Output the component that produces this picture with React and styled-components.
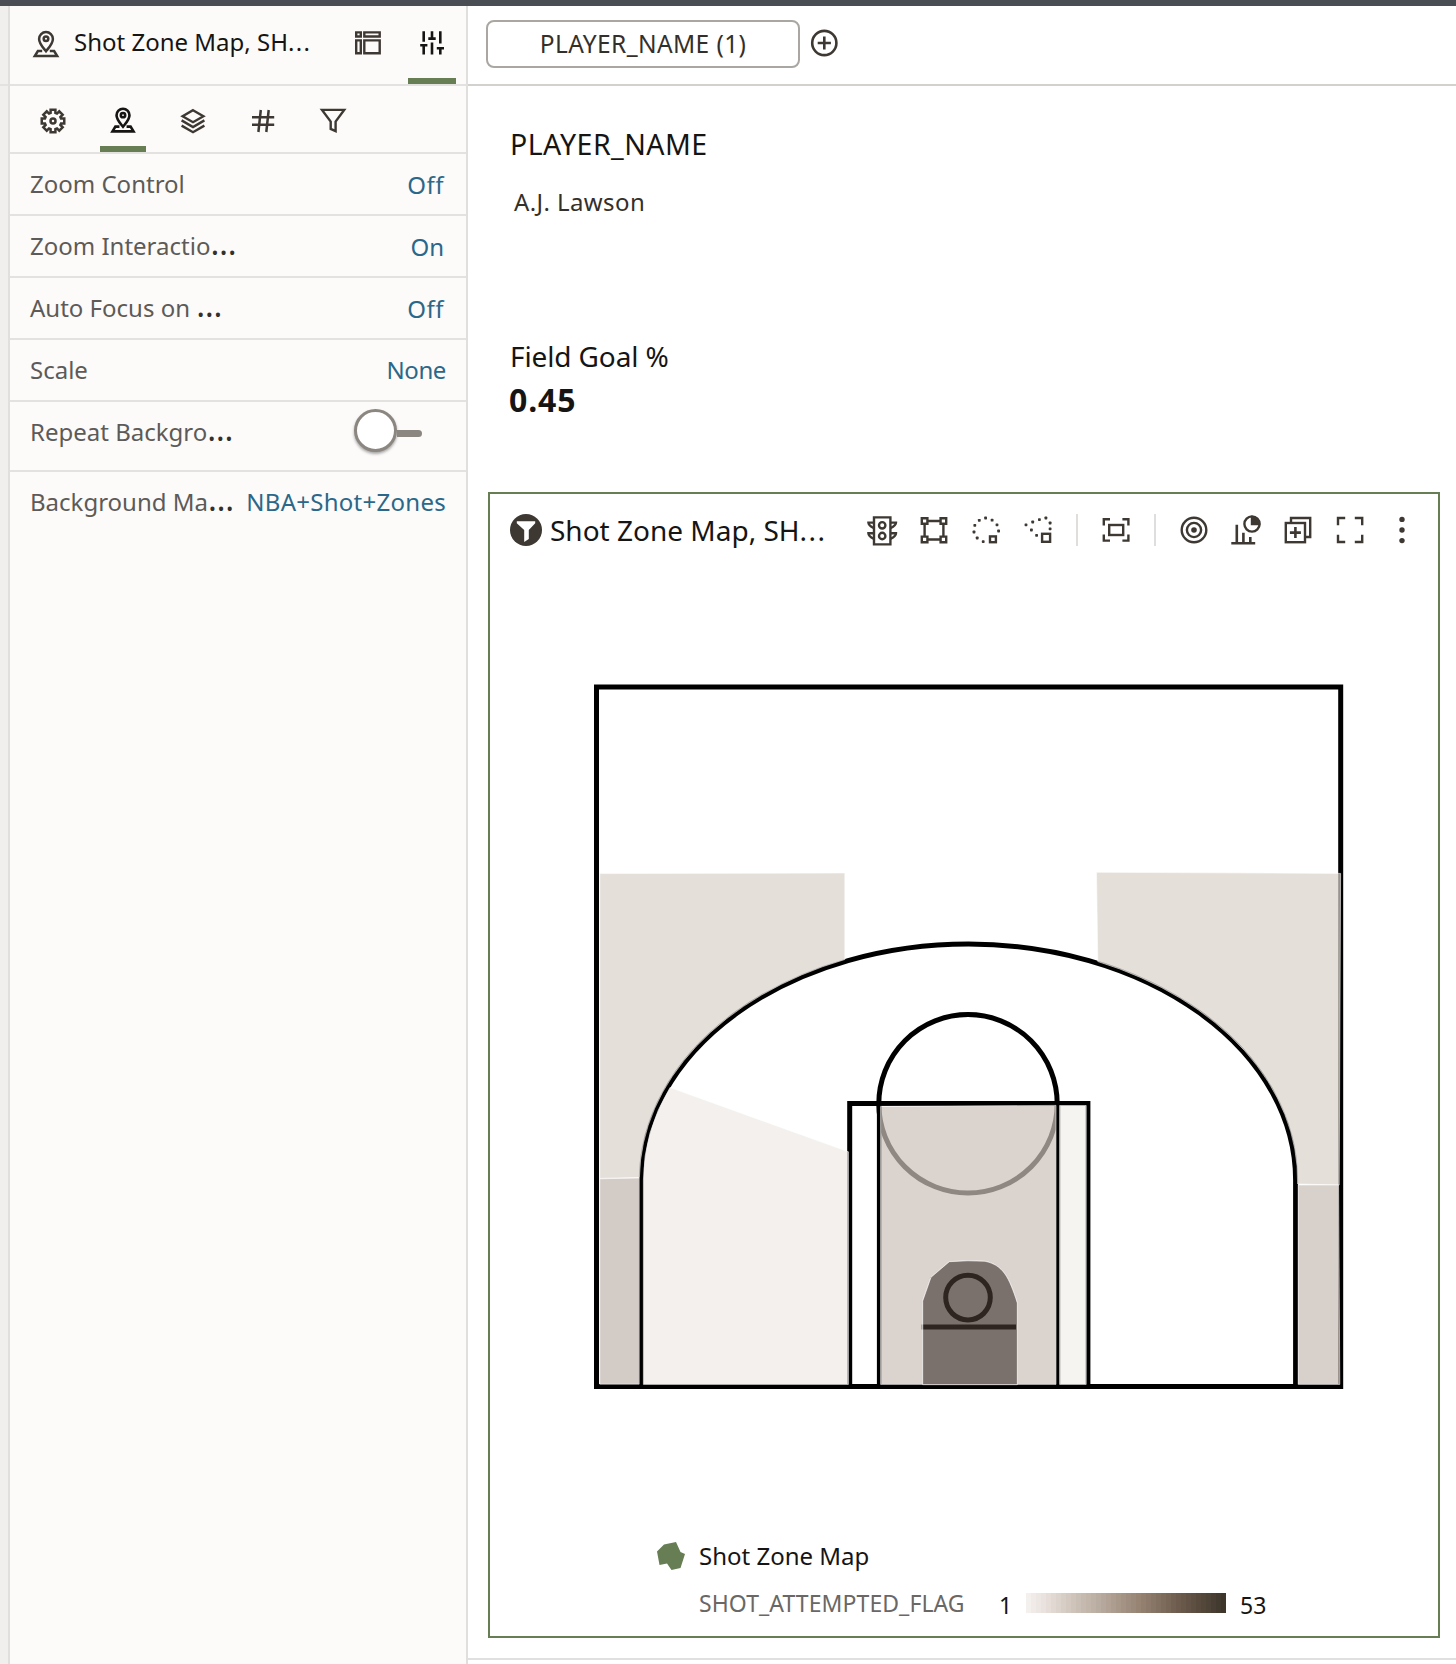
import React from "react";
import styled, { createGlobalStyle } from "styled-components";

const ink = "#161513";
const icon = "#3d3832";
const green = "#677d54";
const link = "#2b6788";
const line = "#e3e2e0";

const GlobalStyle = createGlobalStyle`
  * { box-sizing: border-box; }
  body {
    margin: 0;
    background: #fff;
    color: ${ink};
    font-family: "Noto Sans", "Open Sans", sans-serif;
    -webkit-font-smoothing: antialiased;
  }
`;

const Page = styled.div`
  display: flex;
  flex-direction: column;
  width: 1456px;
  height: 1664px;
  overflow: hidden;
`;
const TopBar = styled.div`
  height: 6px;
  flex: none;
  background: #4b4d55;
`;
const Body = styled.div`
  display: flex;
  flex: 1;
  min-height: 0;
`;
const Rail = styled.div`
  width: 10px;
  flex: none;
  background: #f0efed;
  border-right: 2px solid #e0dfdd;
`;
const RailHead = styled.div`
  height: 80px;
  border-bottom: 2px solid ${line};
`;
const Panel = styled.aside`
  width: 458px;
  flex: none;
  background: #fcfbfa;
  border-right: 2px solid #e0dfdd;
`;
const PanelHead = styled.header`
  display: flex;
  height: 80px;
  padding: 0 10px 0 20px;
  border-bottom: 2px solid ${line};
`;
const HeadIcon = styled.div`
  padding-top: 22px;
  width: 44px;
  flex: none;
`;
const Title = styled.div`
  flex: 1;
  height: 72px;
  line-height: 72px;
  font-size: 24px;
  white-space: nowrap;
`;
const TitleDots = styled.span`
  letter-spacing: 1.4px;
`;
const HeadTab = styled.div`
  display: flex;
  flex-direction: column;
  align-items: center;
  justify-content: space-between;
  width: 48px;
  margin-left: ${(p) => (p.$active ? 17 : 15)}px;
  padding-top: 21px;
  border-bottom: ${(p) => (p.$active ? `6px solid ${green}` : "0")};
  flex: none;
`;
const SubTabs = styled.nav`
  display: flex;
  gap: 24px;
  height: 68px;
  padding-left: 20px;
  border-bottom: 2px solid ${line};
`;
const SubTab = styled.div`
  display: flex;
  justify-content: center;
  width: 46px;
  padding-top: 19px;
  border-bottom: ${(p) => (p.$active ? `6px solid ${green}` : "0")};
`;
const Row = styled.div`
  display: flex;
  justify-content: space-between;
  height: ${(p) => (p.$tall ? 70 : 62)}px;
  padding: 0 ${(p) => p.$right || 20}px 0 20px;
  border-bottom: ${(p) => (p.$last ? "0" : `2px solid ${line}`)};
  line-height: 60px;
  font-size: 24px;
  white-space: nowrap;
`;
const Label = styled.span`
  height: 60px;
  color: #5d5a57;
`;
const Dots = styled.span`
  color: #33302c;
  font-size: 33px;
  line-height: 0;
`;
const Value = styled.span`
  color: ${link};
  line-height: ${(p) => (p.$raised ? 60 : 62)}px;
  letter-spacing: ${(p) => p.$track || 0}px;
`;
const Toggle = styled.div`
  display: flex;
  align-items: center;
  height: 43px;
  margin-top: 7px;
`;
const Thumb = styled.div`
  width: 43px;
  height: 43px;
  border: 3px solid #8b8680;
  border-radius: 50%;
  background: #fff;
  box-shadow: 0 2px 3px rgba(0, 0, 0, 0.35);
`;
const Track = styled.div`
  width: 25px;
  height: 7px;
  margin-top: 5px;
  border-radius: 0 4px 4px 0;
  background: #8b8680;
`;

const Main = styled.main`
  display: flex;
  flex-direction: column;
  flex: 1;
`;
const FilterBar = styled.div`
  display: flex;
  height: 80px;
  padding: 14px 0 0 18px;
  border-bottom: 2px solid #d3d1ce;
  flex: none;
`;
const Pill = styled.div`
  width: 314px;
  height: 48px;
  border: 2px solid #aaa6a1;
  border-radius: 8px;
  text-align: center;
  font-size: 24.5px;
  line-height: 43px;
  letter-spacing: 0.4px;
  color: #33302c;
`;
const AddButton = styled.div`
  padding: 7px 0 0 8px;
`;
const Canvas = styled.div`
  display: flex;
  flex-direction: column;
  height: 1574px;
  padding: 0 16px 20px 20px;
  border-bottom: 2px solid #e0e0e0;
`;
const Heading = styled.div`
  height: 40px;
  padding-left: 22px;
  margin-top: ${(p) => p.$top}px;
  font-size: ${(p) => p.$size || 28}px;
  line-height: 40px;
  letter-spacing: ${(p) => p.$track || 0}px;
`;
const PlayerValue = styled.div`
  height: 36px;
  margin-top: 19px;
  padding-left: 26px;
  font-size: 24px;
  line-height: 38px;
  letter-spacing: 0.4px;
  color: #33302c;
`;
const Metric = styled.div`
  height: 44px;
  padding-left: 21px;
  font-size: 32px;
  font-weight: 700;
  line-height: 47px;
  letter-spacing: 0.9px;
`;
const Card = styled.section`
  display: flex;
  flex-direction: column;
  height: 1146px;
  margin-top: auto;
  flex: none;
  border: 2px solid ${green};
`;
const CardBar = styled.div`
  display: flex;
  height: 76px;
  padding: 0 20px;
`;
const FilterBadge = styled.div`
  padding-top: 20px;
  width: 40px;
  flex: none;
`;
const CardTitle = styled.div`
  flex: 1;
  font-size: 28px;
  line-height: 72px;
  white-space: nowrap;
`;
const Tools = styled.div`
  display: flex;
  align-items: flex-start;
  gap: 20px;
  padding-top: 20px;
`;
const Divider = styled.div`
  width: 2px;
  height: 32px;
  margin: 0 2px;
  background: #dfdedd;
`;
const Court = styled.svg`
  display: block;
  flex: none;
`;
const Legend = styled.div`
  display: grid;
  grid-template-columns: 42px auto;
  padding: 31px 0 0 167px;
`;
const LegendTitle = styled.div`
  height: 47px;
  font-size: 24px;
  line-height: 46px;
`;
const LegendMark = styled.div`
  padding-top: 9px;
`;
const Scale = styled.div`
  display: flex;
  grid-column: 2;
  height: 46px;
  line-height: 46px;
`;
const Measure = styled.div`
  width: 300px;
  font-size: 23px;
  letter-spacing: 0.08px;
  color: #6a6764;
`;
const Bound = styled.div`
  width: ${(p) => p.$w}px;
  padding-top: 2px;
  font-size: 23px;
`;
const Ramp = styled.div`
  display: flex;
  width: 200px;
  height: 20px;
  margin: 13px 14px 0 0;
`;
const RampCell = styled.div`
  flex: 1;
`;
const Glyph = styled.svg`
  display: block;
  flex: none;
`;

const Svg = ({ size = 32, color = icon, children }) => (
  <Glyph width={size} height={size} viewBox="0 0 32 32" fill="none" stroke={color} strokeWidth="2.4">
    {children}
  </Glyph>
);

const PinIcon = ({ size, color = icon, weight = 2.5 }) => (
  <Svg size={size} color={color}>
    <g strokeWidth={weight}>
      <path d="M16 23.2C13 19.4 9.1 15.6 9.1 10.9a6.9 6.9 0 0 1 13.8 0C22.9 15.6 19 19.4 16 23.2z" />
      <circle cx="16" cy="10.8" r="2.3" />
      <path d="M12.2 23H7.9L4.8 28.1H27.2L24.1 23H19.8" />
    </g>
  </Svg>
);
const LayoutIcon = () => (
  <Svg>
    <path d="M5.2 5.4h4.6v4.1H5.2zM13.3 5.4h15.4v4.1H13.3zM5.2 13.4h4.6v12.8H5.2zM13.3 13.4h15.4v12.8H13.3z" />
  </Svg>
);
const SlidersIcon = () => (
  <Svg color={ink}>
    <g strokeWidth="2.6">
      <path d="M7.7 4.3V14.7M4.2 18.3h7.2M7.7 18.3V27.6M16 4.3V11.5M12.3 11.6h7.4M16 15.6V27.6M24.3 4.3V16.4M20.8 21.2h7.2M24.3 21.2V27.6" />
    </g>
  </Svg>
);

function gearPath() {
  const pts = [];
  for (let i = 0; i < 8; i++) {
    const base = (i * Math.PI) / 4 - Math.PI / 2;
    [[-0.29, 8.4], [-0.21, 11.5], [0.21, 11.5], [0.29, 8.4]].forEach(([a, r]) => {
      pts.push(`${(16 + r * Math.cos(base + a)).toFixed(2)} ${(16 + r * Math.sin(base + a)).toFixed(2)}`);
    });
  }
  return `M${pts.join("L")}Z`;
}
const GearIcon = () => (
  <Svg>
    <path d={gearPath()} strokeWidth="2.5" />
    <circle cx="16" cy="16" r="2.5" strokeWidth="2.5" />
  </Svg>
);
const LayersIcon = () => (
  <Svg>
    <path d="M16 5.2L26.4 11.2L16 17.2L5.6 11.2Z" />
    <path d="M4.6 15.4L16 22L27.4 15.4M4.6 20.6L16 27.2L27.4 20.6" />
  </Svg>
);
const HashIcon = () => (
  <Svg>
    <path d="M5 12.3H27.2M5 19.8H27.2M13.8 5L11.4 27M21.7 5L19.3 27" strokeWidth="2.5" />
  </Svg>
);
const FunnelIcon = () => (
  <Svg>
    <path d="M5 4.9H27.2L18.6 16.6V26.2L13.7 23.9V16.6Z" />
  </Svg>
);
const PlusCircleIcon = () => (
  <Svg>
    <circle cx="16.3" cy="16" r="12.1" strokeWidth="2.6" />
    <path d="M16.3 9.4V22.6M9.7 16H22.9" strokeWidth="2.6" />
  </Svg>
);
const FilterBadgeIcon = () => (
  <Svg>
    <circle cx="16" cy="16" r="16" fill={icon} stroke="none" />
    <path d="M6.8 7.2H25.2V9.2L18.8 16V25L14.2 28V16L6.8 9.2Z" fill="#fff" stroke="none" />
  </Svg>
);
const TrafficIcon = () => (
  <Svg>
    <path d="M8 3.4H24.4V30.4H8Z" />
    <circle cx="16.2" cy="11.3" r="3.2" />
    <circle cx="16.2" cy="22" r="3.2" />
    <path d="M8 8.6H2.4C2.4 11 4.5 12.6 8 14.2M8 19.3H2.4C2.4 21.7 4.5 23.3 8 24.9M24.4 8.6H30C30 11 27.9 12.6 24.4 14.2M24.4 19.3H30C30 21.7 27.9 23.3 24.4 24.9" />
  </Svg>
);
const RectSelectIcon = () => (
  <Svg>
    <path d="M3.8 4.2h5.6v5.6H3.8zM22.6 4.2h5.6v5.6H22.6zM3.8 22.6h5.6v5.6H3.8zM22.6 22.6h5.6v5.6H22.6zM9.3 7H22.7M9.3 25.5H22.7M6.6 9.8V22.7M25.4 9.8V22.7" />
  </Svg>
);
const dotSquares = (pts) =>
  pts.map(([x, y]) => <rect key={`${x}-${y}`} x={x - 1.4} y={y - 1.4} width="2.8" height="2.8" rx="0.7" fill={icon} stroke="none" />);
const CircleSelectIcon = () => (
  <Svg>
    {dotSquares([[15.6, 4], [22.1, 6.2], [27, 10.8], [28.6, 17], [9.3, 6.3], [4.8, 11.4], [4, 18], [7.2, 24], [13.2, 27.6]])}
    <rect x="20" y="22.4" width="5.9" height="5.8" />
  </Svg>
);
const LassoIcon = () => (
  <Svg>
    {dotSquares([[23.9, 4], [17.4, 5.6], [10.7, 8], [4, 10.8], [9.4, 16], [14.6, 21.4], [28.1, 9], [28.1, 14.8]])}
    <rect x="20.1" y="19.8" width="8" height="8" />
  </Svg>
);
const FitIcon = () => (
  <Svg>
    <path d="M3.8 11.4V5.2H10M22.4 5.2H28.4V11.4M28.4 20.6V26.6H22.4M10 26.6H3.8V20.6" />
    <rect x="9.2" y="11" width="14" height="10" />
  </Svg>
);
const TargetIcon = () => (
  <Svg>
    <circle cx="16" cy="16" r="12.3" />
    <circle cx="16" cy="16" r="7.1" />
    <circle cx="16" cy="16" r="2.8" fill={icon} stroke="none" />
  </Svg>
);
const ChartIcon = () => (
  <Svg>
    <path d="M1.3 29.3H25.2M6.8 29V10.7M13.4 29V18.7M20.3 29V23" strokeWidth="2.6" />
    <circle cx="22" cy="10" r="7.6" />
    <path d="M22 10V3A7 7 0 0 1 29 10Z" fill={icon} />
  </Svg>
);
const CopyPlusIcon = () => (
  <Svg>
    <path d="M9 8V4H28.2V23H23" />
    <rect x="3.8" y="9" width="19.2" height="19.2" />
    <path d="M13.4 13V24M7.9 18.6H18.9" strokeWidth="2.6" />
  </Svg>
);
const ExpandIcon = () => (
  <Svg>
    <path d="M4 11.2V4H11.2M20.8 4H28.2V11.2M28.2 20.8V28H20.8M11.2 28H4V20.8" />
  </Svg>
);
const MoreIcon = () => (
  <Svg>
    {[5.4, 16, 26.6].map((y) => (
      <circle key={y} cx="16" cy={y} r="2.7" fill={icon} stroke="none" />
    ))}
  </Svg>
);

const settings = [
  { label: "Zoom Control", value: "Off", right: 22, track: 0.5 },
  { label: "Zoom Interactio", cut: true, value: "On", right: 22 },
  { label: "Auto Focus on ", cut: true, value: "Off", right: 22, track: 0.5 },
  { label: "Scale", value: "None", right: 20, raised: true, track: -0.4 },
  { label: "Repeat Backgro", cut: true, toggle: true, right: 44 },
  { label: "Background Ma", cut: true, value: "NBA+Shot+Zones", raised: true, last: true, track: 0.27 },
];

const rimZone =
  "M922.7 1384.6V1301L931 1277.3L949.3 1261.7L968 1260.8L985 1261.3C1003 1265 1009 1277 1017.3 1303V1384.6Z";

function CourtMap() {
  return (
    <Court width="948" height="932" viewBox="490 570 948 932" fill="none">
      <g stroke="#000" strokeWidth="5">
        <rect x="596.5" y="687" width="744.2" height="699.5" />
        <path d="M641.3 1386.5V1180A327.1 236 0 0 1 1295.6 1180V1386.5" />
        <path d="M849.7 1386.5V1103.6H1087.9V1386.5" />
        <path d="M879.2 1386.5V1103.6M1058.1 1103.6V1386.5" strokeWidth="4.6" />
        <circle cx="968" cy="1103.8" r="89.2" />
        <circle cx="968" cy="1297.6" r="22.3" />
        <path d="M921.4 1327H1016" />
      </g>
      <g stroke="#fff" strokeOpacity="0.7" strokeWidth="0.8" fillOpacity="0.7">
        <path d="M599.8 873.6L844.8 873V959.5A329 238 0 0 0 639.4 1177.5L599.8 1178.4Z" fill="rgb(216,209,201)" />
        <path d="M1340.6 873.4L1096.5 872.3L1097.8 961.5A328.6 237.6 0 0 1 1297.6 1184L1339.2 1185Z" fill="rgb(216,209,201)" />
        <path d="M599.8 1178.8L639.2 1178V1384.2H599.8Z" fill="rgb(193,181,174)" />
        <path d="M1298.2 1185H1338.6L1339.8 1384.4H1298.2Z" fill="rgb(199,188,181)" />
        <path d="M670 1087.5L848.4 1151.8V1384.4H643.4V1180A325 234 0 0 1 670 1087.5Z" fill="rgb(238,234,229)" />
        <path d="M1059.6 1105.5H1086.2V1384.4H1059.6Z" fill="rgb(241,239,234)" />
        <path fillRule="evenodd" d={`M880.6 1106.4L1056 1105.4V1384.4H880.6Z ${rimZone}`} fill="rgb(204,192,185)" />
        <path d={rimZone} fill="rgb(66,53,46)" />
      </g>
    </Court>
  );
}

const rampStops = [
  [0, [244, 240, 238]],
  [0.1, [230, 222, 217]],
  [0.22, [208, 198, 188]],
  [0.38, [182, 168, 156]],
  [0.58, [148, 129, 112]],
  [0.78, [107, 90, 76]],
  [1, [62, 54, 43]],
];
function rampColor(t) {
  const i = Math.max(1, rampStops.findIndex(([s]) => s >= t));
  const [a, ca] = rampStops[i - 1];
  const [b, cb] = rampStops[i];
  return `rgb(${ca.map((c, k) => Math.round(c + ((cb[k] - c) * (t - a)) / (b - a))).join(",")})`;
}
const ramp = Array.from({ length: 40 }, (_, i) => rampColor(i / 39));

export default function App() {
  return (
    <Page>
      <GlobalStyle />
      <TopBar />
      <Body>
        <Rail>
          <RailHead />
        </Rail>
        <Panel>
          <PanelHead>
            <HeadIcon>
              <PinIcon />
            </HeadIcon>
            <Title>Shot Zone Map, SH<TitleDots>...</TitleDots></Title>
            <HeadTab>
              <LayoutIcon />
            </HeadTab>
            <HeadTab $active>
              <SlidersIcon />
            </HeadTab>
          </PanelHead>
          <SubTabs>
            <SubTab><GearIcon /></SubTab>
            <SubTab $active><PinIcon size={30} color={ink} weight={2.8} /></SubTab>
            <SubTab><LayersIcon /></SubTab>
            <SubTab><HashIcon /></SubTab>
            <SubTab><FunnelIcon /></SubTab>
          </SubTabs>
          {settings.map((s) => (
            <Row key={s.label} $tall={s.toggle} $right={s.right} $last={s.last}>
              <Label>
                {s.label}
                {s.cut && <Dots>…</Dots>}
              </Label>
              {s.toggle ? (
                <Toggle>
                  <Thumb />
                  <Track />
                </Toggle>
              ) : (
                <Value $raised={s.raised} $track={s.track}>{s.value}</Value>
              )}
            </Row>
          ))}
        </Panel>
        <Main>
          <FilterBar>
            <Pill>PLAYER_NAME (1)</Pill>
            <AddButton>
              <PlusCircleIcon />
            </AddButton>
          </FilterBar>
          <Canvas>
            <Heading $top={38} $size={28.5} $track={0.45}>PLAYER_NAME</Heading>
            <PlayerValue>A.J. Lawson</PlayerValue>
            <Heading $top={117} $track={-0.12}>Field Goal %</Heading>
            <Metric>0.45</Metric>
            <Card>
              <CardBar>
                <FilterBadge>
                  <FilterBadgeIcon />
                </FilterBadge>
                <CardTitle>Shot Zone Map, SH<TitleDots>...</TitleDots></CardTitle>
                <Tools>
                  <TrafficIcon />
                  <RectSelectIcon />
                  <CircleSelectIcon />
                  <LassoIcon />
                  <Divider />
                  <FitIcon />
                  <Divider />
                  <TargetIcon />
                  <ChartIcon />
                  <CopyPlusIcon />
                  <ExpandIcon />
                  <MoreIcon />
                </Tools>
              </CardBar>
              <CourtMap />
              <Legend>
                <LegendMark>
                  <Glyph width="28" height="28" viewBox="0 0 28 28" fill={green}>
                    <path d="M0 9.5L7 2.5L19 0L23.5 10L28 12L23.5 26L14.5 28L10 21.5L2.5 23Z" />
                  </Glyph>
                </LegendMark>
                <LegendTitle>Shot Zone Map</LegendTitle>
                <Scale>
                  <Measure>SHOT_ATTEMPTED_FLAG</Measure>
                  <Bound $w={27}>1</Bound>
                  <Ramp>
                    {ramp.map((c) => (
                      <RampCell key={c} style={{ background: c }} />
                    ))}
                  </Ramp>
                  <Bound $w={40}>53</Bound>
                </Scale>
              </Legend>
            </Card>
          </Canvas>
        </Main>
      </Body>
    </Page>
  );
}
